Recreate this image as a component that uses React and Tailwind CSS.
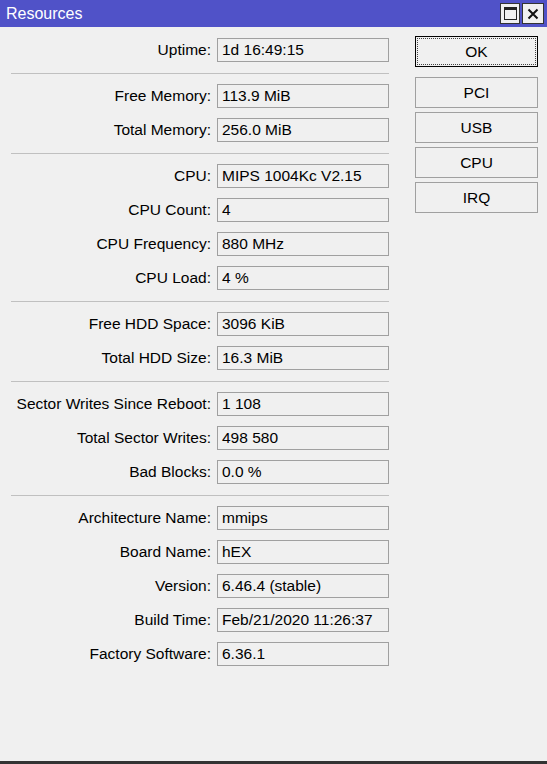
const groups = [
  [["Uptime", "1d 16:49:15"]],
  [
    ["Free Memory", "113.9 MiB"],
    ["Total Memory", "256.0 MiB"],
  ],
  [
    ["CPU", "MIPS 1004Kc V2.15"],
    ["CPU Count", "4"],
    ["CPU Frequency", "880 MHz"],
    ["CPU Load", "4 %"],
  ],
  [
    ["Free HDD Space", "3096 KiB"],
    ["Total HDD Size", "16.3 MiB"],
  ],
  [
    ["Sector Writes Since Reboot", "1 108"],
    ["Total Sector Writes", "498 580"],
    ["Bad Blocks", "0.0 %"],
  ],
  [
    ["Architecture Name", "mmips"],
    ["Board Name", "hEX"],
    ["Version", "6.46.4 (stable)"],
    ["Build Time", "Feb/21/2020 11:26:37"],
    ["Factory Software", "6.36.1"],
  ],
];

function Row({ label, value }) {
  return (
    <div className="flex h-[34px] items-center">
      <div className="w-[211px] text-right whitespace-nowrap">{label}:</div>
      <div className="ml-[6px] flex h-[24px] w-[172px] items-center border border-[#a0a0a0] pl-[4px] whitespace-nowrap">
        {value}
      </div>
    </div>
  );
}

function Btn({ children }) {
  return (
    <button className="flex h-[31px] w-[123px] items-center justify-center border border-[#a0a0a0] bg-[#f0f0f0]">
      {children}
    </button>
  );
}

export default function App() {
  return (
    <div
      className="flex h-[764px] w-[547px] flex-col bg-[#f0f0f0] text-[15.5px] text-black"
      style={{ fontFamily: '"Liberation Sans", Arial, sans-serif' }}
    >
      {/* title bar */}
      <div className="flex h-[27px] items-center bg-[#5052c8] pl-[6px] pr-[3px]">
        <span className="flex-1 text-[16px] text-white">Resources</span>
        <div className="flex gap-[2px]">
          <div className="flex h-[21px] w-[20px] items-center justify-center border border-[#333] bg-[#f0f0f0]">
            <div className="h-[13px] w-[13px] border border-[#222] border-t-[3px]" />
          </div>
          <div className="flex h-[21px] w-[22px] items-center justify-center border border-[#333] bg-[#f0f0f0]">
            <svg width="12" height="12" viewBox="0 0 12 12">
              <path d="M1.5 1.5 L10.5 10.5 M10.5 1.5 L1.5 10.5" stroke="#111" strokeWidth="2" />
            </svg>
          </div>
        </div>
      </div>

      <div className="flex flex-1 border-b-[3px] border-[#333]">
        <div className="pt-[6px]">
          {groups.map((g, i) => (
            <div key={i}>
              {i > 0 && (
                <div className="flex h-[12px] items-center">
                  <div className="ml-[11px] w-[378px] border-t border-[#c0c0c0]" />
                </div>
              )}
              {g.map(([l, v]) => (
                <Row key={l} label={l} value={v} />
              ))}
            </div>
          ))}
        </div>

        <div className="ml-[26px] flex flex-col pt-[9px]">
          <button className="mb-[10px] h-[31px] w-[123px] border border-black bg-[#f0f0f0] p-[1px]">
            <div className="flex h-full w-full items-center justify-center border border-dotted border-[#444]">
              OK
            </div>
          </button>
          <div className="flex flex-col gap-[4px]">
            <Btn>PCI</Btn>
            <Btn>USB</Btn>
            <Btn>CPU</Btn>
            <Btn>IRQ</Btn>
          </div>
        </div>
      </div>
    </div>
  );
}
